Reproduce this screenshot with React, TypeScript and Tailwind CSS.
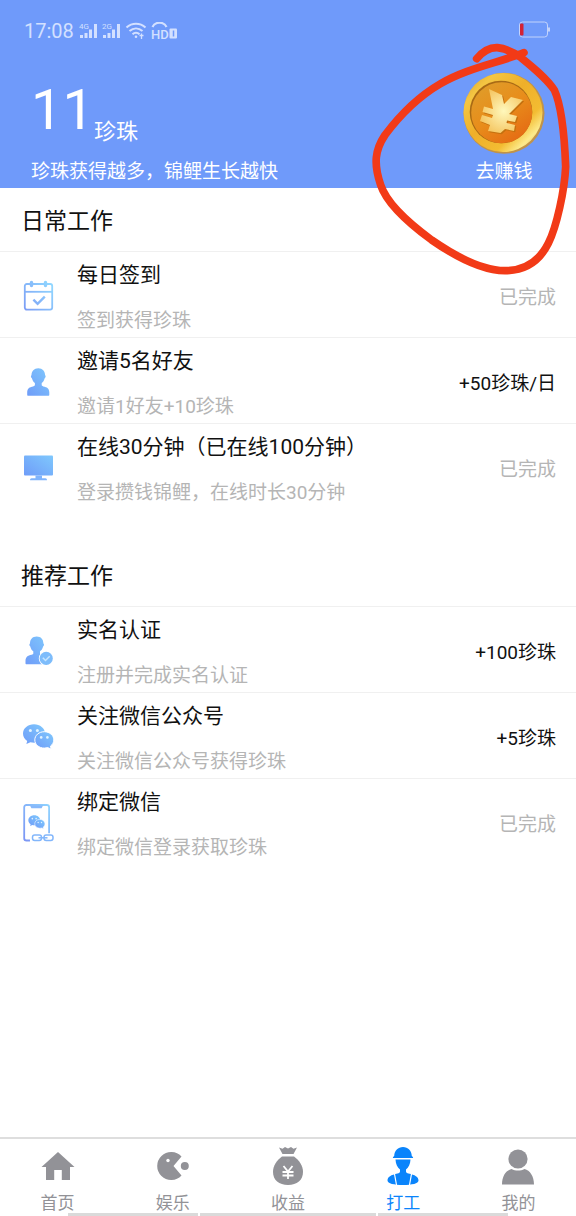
import * as React from "react";

type Task = {
  title: string;
  desc: string;
  reward?: string;
  icon: React.ReactNode;
};

function BlueGradient({ id }: { id: string }) {
  return (
    <defs>
      <linearGradient id={id} x1="0" y1="1" x2="1" y2="0">
        <stop offset="0" stopColor="#6f9cf8" />
        <stop offset="1" stopColor="#7fc8fd" />
      </linearGradient>
    </defs>
  );
}

function CalendarIcon() {
  return (
    <svg viewBox="0 0 32 32" className="size-8" fill="none" aria-hidden="true">
      <defs>
        <linearGradient id="cal" gradientUnits="userSpaceOnUse" x1="2" y1="28" x2="30" y2="6">
          <stop offset="0" stopColor="#7c9df5" />
          <stop offset="1" stopColor="#90d6ff" />
        </linearGradient>
      </defs>
      <rect x="2.8" y="4" width="27.4" height="25.6" rx="2" stroke="url(#cal)" strokeWidth="1.8" />
      <path d="M3 11.8h27" stroke="url(#cal)" strokeWidth="1.8" />
      <path d="M9.5 2.5v3M23.5 2.5v3" stroke="url(#cal)" strokeWidth="3.4" strokeLinecap="round" />
      <path d="M11.4 19.6l4.2 4.2 7.2-7.2" stroke="url(#cal)" strokeWidth="2.4" />
    </svg>
  );
}

function FriendIcon() {
  return (
    <svg viewBox="0 0 32 32" className="size-8" aria-hidden="true">
      <BlueGradient id="friend" />
      <path
        fill="url(#friend)"
        d="M16.3 2.2c4.2 0 6.8 2.9 6.8 7 .9.4.7 2.3-.4 3-.6 2.3-1.7 3.8-3 4.8v2.1c0 .7.6 1.1 1.6 1.3 3.8.7 6 1.8 6 6.2v2.2c0 .7-.4 1-1 1H6.200c-.6 0-1-.3-1-1v-2.200c0-4.400 2.200-5.500 6-6.200 1-.2 1.700-.6 1.700-1.300V17c-1.300-1-2.400-2.500-3-4.800-1.100-.7-1.300-2.600-.4-3 0-4.100 2.600-7 6.800-7z"
      />
    </svg>
  );
}

function MonitorIcon() {
  return (
    <svg viewBox="0 0 32 32" className="size-8" aria-hidden="true">
      <BlueGradient id="monitor" />
      <rect x="2" y="3.500" width="29" height="20" rx="1" fill="url(#monitor)" />
      <path d="M13.500 23.500h6.500v2.800h3.400c1 0 1.600.7 1.600 2H8c0-1.300.6-2 1.600-2h3.900z" fill="#80b4fc" />
    </svg>
  );
}

function VerifiedIcon() {
  return (
    <svg viewBox="0 0 32 32" className="size-8" aria-hidden="true">
      <BlueGradient id="verified" />
      <path
        fill="url(#verified)"
        d="M14.700 1.600c4.200 0 6.700 2.900 6.700 6.800.9.4.8 2.300-.3 3-.5 2.300-1.700 3.800-3.100 4.800v2.200c0 .7.700 1 1.700 1.300 3.800.8 6.300 2.100 6.300 6.300v3.200H4.500c-.6 0-1-.3-1-1V26c0-4.200 2.200-5.500 6.100-6.300 1-.2 1.700-.6 1.700-1.300v-2.200c-1.400-1-2.500-2.500-3-4.800-1.100-.7-1.200-2.600-.3-3 0-3.900 2.500-6.800 6.700-6.800z"
      />
      <circle cx="24.200" cy="23.400" r="7.400" fill="#fff" />
      <circle cx="24.200" cy="23.400" r="6.600" fill="#7dbcfb" />
      <path d="M20.800 22.800l2.700 2.700 4.200-4.200" fill="none" stroke="#c6e5ff" strokeWidth="1.500" />
    </svg>
  );
}

function ChatBubbles({ id }: { id: string }) {
  return (
    <>
      <BlueGradient id={id} />
      <path
        fill={`url(#${id})`}
        d="M12 3.200C6 3.200 1 7.200 1 12.500c0 3 1.600 5.700 4.200 7.400L4.400 23l4-1.700c1.100.3 2.400.5 3.600.5 6 0 11-4 11-9.300S18 3.200 12 3.200z"
      />
      <path
        fill={`url(#${id})`}
        stroke="#fff"
        strokeWidth="1"
        d="M22.300 10.700c5.200 0 9.500 3.600 9.500 8.200 0 2.500-1.300 4.700-3.300 6.200l.7 3-3.600-1.500c-1 .3-2.100.5-3.300.5-5.200 0-9.500-3.600-9.500-8.200s4.300-8.200 9.500-8.200z"
      />
      <g fill="#e1f3ff">
        <circle cx="8.400" cy="9.400" r="1.500" />
        <circle cx="15.400" cy="9.400" r="1.500" />
        <circle cx="19.200" cy="16.400" r="1.300" />
        <circle cx="25.400" cy="16.400" r="1.300" />
      </g>
    </>
  );
}

function WechatIcon() {
  return (
    <svg viewBox="0 0 32 32" className="size-8" aria-hidden="true">
      <ChatBubbles id="wechat" />
    </svg>
  );
}

function BindIcon() {
  return (
    <svg viewBox="0 0 32 40" className="h-10 w-8 shrink-0" fill="none" aria-hidden="true">
      <defs>
        <linearGradient id="phone" x1="0" y1="1" x2="1" y2="0">
          <stop offset="0" stopColor="#7b95f4" />
          <stop offset="1" stopColor="#8fd3ff" />
        </linearGradient>
      </defs>
      <path
        d="M8 37.500H4.500c-1.400 0-2.300-.9-2.300-2.300V4.300C2.200 2.900 3.100 2 4.500 2h20.300c1.400 0 2.300.9 2.300 2.300v26"
        stroke="url(#phone)"
        strokeWidth="1.800"
      />
      <path d="M8 2.500h13l-1.400 2.700H9.400z" fill="#87b9fb" />
      <g transform="translate(5.800 10.600) scale(.54)">
        <ChatBubbles id="bindchat" />
      </g>
      <g stroke="#82b6fb" strokeWidth="1.500">
        <rect x="10.500" y="32" width="9" height="5.500" rx="2.200" />
        <rect x="22" y="32" width="9" height="5.500" rx="2.200" />
        <path d="M16.500 34.800h9" />
      </g>
    </svg>
  );
}

// the yen sign is used twice: once as a drop shadow, once as the relief
const coinMark =
  "M26 17L39 23L41 32L48 25L60 28L46 42L54 44L52 50L44 48.500L43.500 51L52 53L51 59L42 57L37.500 61L25 59L27 53L17 49L19 43L29 46L30 43L19.500 40L21 34.500L30 37Z";

function CoinIcon() {
  return (
    <svg viewBox="0 0 82 82" className="size-[82px]" aria-hidden="true">
      <defs>
        <linearGradient id="rim" x1="0" y1="0" x2="1" y2="1">
          <stop offset="0" stopColor="#d79a25" />
          <stop offset=".2" stopColor="#f4c643" />
          <stop offset=".45" stopColor="#efaf29" />
          <stop offset=".7" stopColor="#f3bc32" />
          <stop offset=".83" stopColor="#fdeb8c" />
          <stop offset="1" stopColor="#d9952a" />
        </linearGradient>
        <linearGradient id="face" x1="0" y1="0" x2=".7" y2="1">
          <stop offset="0" stopColor="#dda02d" />
          <stop offset=".55" stopColor="#e88d1b" />
          <stop offset="1" stopColor="#e56c14" />
        </linearGradient>
        <radialGradient id="yen" cx=".55" cy=".5" r=".6">
          <stop offset="0" stopColor="#fff8bc" />
          <stop offset="1" stopColor="#f4c25b" />
        </radialGradient>
      </defs>
      <circle cx="41" cy="41.300" r="40.500" fill="#c0934a" />
      <circle cx="40" cy="40.500" r="39.500" fill="url(#rim)" />
      <circle cx="38" cy="40" r="31.300" fill="#a86a15" />
      <circle cx="38.700" cy="40.700" r="30.500" fill="url(#face)" />
      <path d={coinMark} transform="translate(1.200 1.200)" fill="#c4700f" />
      <path d={coinMark} fill="url(#yen)" />
    </svg>
  );
}

function Signal({ label }: { label: string }) {
  return (
    <svg viewBox="0 0 19 18" className="h-[18px] w-[19px]" fill="#d3e0ff" aria-hidden="true">
      <text x="0" y="7" fontSize="8" className="font-[Roboto]">
        {label}
      </text>
      <rect x="1" y="13" width="3" height="3" />
      <rect x="5.500" y="11" width="3" height="5" />
      <rect x="10" y="7.500" width="3" height="8.500" />
      <rect x="15" y="2" width="3" height="14" />
    </svg>
  );
}

function StatusBar() {
  return (
    <div className="flex h-[62px] items-center justify-between pr-[25px] pl-6 text-[#d3e0ff]">
      <div className="flex items-center">
        <span className="mr-[5px] text-[20px] leading-6">17:08</span>
        <Signal label="4G" />
        <span className="ml-1">
          <Signal label="2G" />
        </span>
        <svg viewBox="0 0 22 18" className="ml-1 h-[18px] w-[22px]" fill="none" stroke="#d3e0ff" aria-hidden="true">
          <path d="M1.500 5.500c5.500-5 13.500-5 19 0M4.500 9c4-3.500 9-3.500 13 0M7.500 12.200c2-1.800 5-1.800 7 0" strokeWidth="2" />
          <circle cx="11" cy="14.800" r="1.300" fill="#d3e0ff" stroke="none" />
          <path d="M14.500 13.500h4M16.500 11.500v5.500" strokeWidth="1.300" />
        </svg>
        <svg viewBox="0 0 27 18" className="ml-1 h-[18px] w-[27px]" fill="#d3e0ff" aria-hidden="true">
          <path d="M1.500 5C4-.7 13-.7 15.500 5" fill="none" stroke="#d3e0ff" strokeWidth="2.200" />
          <text x="0" y="16.500" fontSize="13" className="font-[Roboto] font-medium">
            HD
          </text>
          <rect x="18.500" y="6.500" width="7.500" height="10" rx="1" />
          <path d="M22.500 8.500v6" stroke="#6f9afa" strokeWidth="1.500" />
        </svg>
      </div>
      <svg viewBox="0 0 33 18" className="mb-1 h-[18px] w-[33px]" fill="none" aria-hidden="true">
        <rect x="1.500" y="2" width="28" height="15" rx="3" stroke="#c3d3fb" strokeWidth="1" />
        <path d="M31 7.500v4" stroke="#c3d3fb" strokeWidth="2" />
        <rect x="2" y="3.500" width="3.500" height="12" rx="1" fill="#d42235" />
      </svg>
    </div>
  );
}

function TaskRow({ task }: { task: Task }) {
  return (
    <li className="flex items-center border-t border-[#f0f0f0] pt-[9px] pr-5 pb-0.5 pl-[22px]">
      <span className="mb-1 flex h-8 w-8 shrink-0 items-center justify-center">{task.icon}</span>
      <div className="ml-[23px] flex flex-1 flex-col gap-[18px]">
        <h3 className="text-[21px] leading-7 text-[#111]">{task.title}</h3>
        <p className="text-[19px] leading-7 text-[#b5b5b5]">{task.desc}</p>
      </div>
      {task.reward ? (
        <span className="text-[19px] leading-7 text-[#111]">{task.reward}</span>
      ) : (
        <span className="text-[19px] leading-7 text-[#b5b5b5]">已完成</span>
      )}
    </li>
  );
}

function TaskSection({ title, tasks }: { title: string; tasks: Task[] }) {
  return (
    <section>
      <h2 className="pt-[18px] pr-5 pb-[13px] pl-[21px] text-[23px] leading-8 text-[#111]">{title}</h2>
      <ul>
        {tasks.map((task) => (
          <TaskRow key={task.title} task={task} />
        ))}
      </ul>
    </section>
  );
}

const daily: Task[] = [
  { title: "每日签到", desc: "签到获得珍珠", icon: <CalendarIcon /> },
  { title: "邀请5名好友", desc: "邀请1好友+10珍珠", reward: "+50珍珠/日", icon: <FriendIcon /> },
  { title: "在线30分钟（已在线100分钟）", desc: "登录攒钱锦鲤，在线时长30分钟", icon: <MonitorIcon /> },
];

const recommended: Task[] = [
  { title: "实名认证", desc: "注册并完成实名认证", reward: "+100珍珠", icon: <VerifiedIcon /> },
  { title: "关注微信公众号", desc: "关注微信公众号获得珍珠", reward: "+5珍珠", icon: <WechatIcon /> },
  { title: "绑定微信", desc: "绑定微信登录获取珍珠", icon: <BindIcon /> },
];

const tabs = [
  {
    label: "首页",
    icon: <path d="M20 6L3.500 21H8v13h8.200V24h7.600v10H32V21h4.500z" />,
  },
  {
    label: "娱乐",
    icon: (
      <>
        <path d="M28.500 10.500A14 14 0 1 0 28.500 29.500L20.500 20z" />
        <circle cx="31.800" cy="20" r="4" />
        <circle cx="15" cy="14.500" r="1.700" fill="#fff" />
      </>
    ),
  },
  {
    label: "收益",
    icon: (
      <>
        <path d="M11 1.500l3.500 1.200L17 1l3 1.500L23 1l2.500 1.700 3.500-1.200-3.500 6.500h-11z" />
        <path d="M14 10.500h12C31 14 35 19.500 35 26c0 8-6 13-15 13S5 34 5 26c0-6.500 4-12 9-15.500z" />
        <path d="M15.500 20l4.500 5.500 4.500-5.500M14.500 26h11M14.500 29.500h11M20 25.500V33" fill="none" stroke="#fff" strokeWidth="1.800" />
      </>
    ),
  },
  {
    label: "打工",
    active: true,
    icon: (
      <>
        <path d="M10 12c-.5-.6.500-1.500 1.200-2C11.500 4.500 15 1 20 1s8.500 3.500 8.800 9c.7.500 1.700 1.400 1.200 2z" />
        <path d="M12.500 13.500h15c-.2 4.500-2 8-4.500 10v2c0 1 1 1.700 2.500 2 6.500 1.300 10 3.500 10 7 0 3-6.500 4.500-15.500 4.500S4.500 37.500 4.500 34.500c0-3.500 3.500-5.700 10-7 1.500-.3 2.500-1 2.500-2v-2c-2.500-2-4.300-5.500-4.500-10z" />
        <path d="M11.500 28l2 11M28.500 28l-2 11" stroke="#fff" strokeWidth="1.200" />
      </>
    ),
  },
  {
    label: "我的",
    icon: (
      <>
        <circle cx="20" cy="13" r="9.600" />
        <path d="M4 38.500C4 30 8 24.500 13.500 23c4 2 9 2 13 0C32 24.500 36 30 36 38.500z" />
      </>
    ),
  },
];

function TabBar() {
  return (
    <nav className="relative border-t-2 border-[#dedede] bg-white pt-[7px] pb-0.5">
      <div className="absolute inset-x-[68px] bottom-0 flex h-[3px] gap-0.5">
        <span className="w-[130px] bg-[#dadada]" />
        <span className="flex-1 bg-[#dadada]" />
        <span className="w-[130px] bg-[#dadada]" />
      </div>
      <ul className="relative grid grid-cols-5">
        {tabs.map((tab) => (
          <li key={tab.label}>
            <a
              href="#"
              aria-current={tab.active ? "page" : undefined}
              className={`flex flex-col items-center gap-1.5 ${tab.active ? "text-[#0a84fb]" : "text-[#929297]"}`}
            >
              <svg viewBox="0 0 40 40" className="size-10" fill="currentColor" aria-hidden="true">
                {tab.icon}
              </svg>
              <span className="text-[17px] leading-[22px]">{tab.label}</span>
            </a>
          </li>
        ))}
      </ul>
    </nav>
  );
}

export default function App() {
  return (
    <div className="relative flex min-h-screen flex-col bg-white font-[Roboto,'Noto_Sans_CJK_SC',sans-serif]">
      <header className="bg-[#6f9afa] text-white">
        <StatusBar />
        <div className="flex items-end justify-between pt-2.5 pr-[31px] pb-1 pl-[31px]">
          <div>
            <div className="flex items-end">
              <span className="pb-2 text-[56px] leading-14">11</span>
              <span className="text-[22px] leading-7">珍珠</span>
            </div>
            <p className="mt-3.5 text-[19px] leading-6">珍珠获得越多，锦鲤生长越快</p>
          </div>
          <button type="button" className="flex flex-col items-center gap-1.5 text-[19px] leading-6">
            <CoinIcon />
            去赚钱
          </button>
        </div>
      </header>

      <main className="flex flex-1 flex-col gap-[34px]">
        <TaskSection title="日常工作" tasks={daily} />
        <TaskSection title="推荐工作" tasks={recommended} />
      </main>

      <TabBar />

      {/* hand-drawn ring around the coin */}
      <svg
        viewBox="0 0 648 840"
        className="pointer-events-none absolute top-0 right-0 h-[280px] w-[216px]"
        fill="none"
        aria-hidden="true"
      >
        <path
          d="M350 176C372 150 390 142 412 143C440 146 462 158 482 172C520 203 560 235 583 270C606 320 614 420 617 500C614 570 590 680 565 730C540 780 500 812 435 812C360 812 280 765 215 720C140 665 80 610 62 555C40 490 45 450 75 405C120 345 175 290 240 252C320 205 410 190 492 158"
          stroke="#f23a17"
          strokeWidth="23"
          strokeLinecap="round"
          strokeLinejoin="round"
        />
      </svg>
    </div>
  );
}
